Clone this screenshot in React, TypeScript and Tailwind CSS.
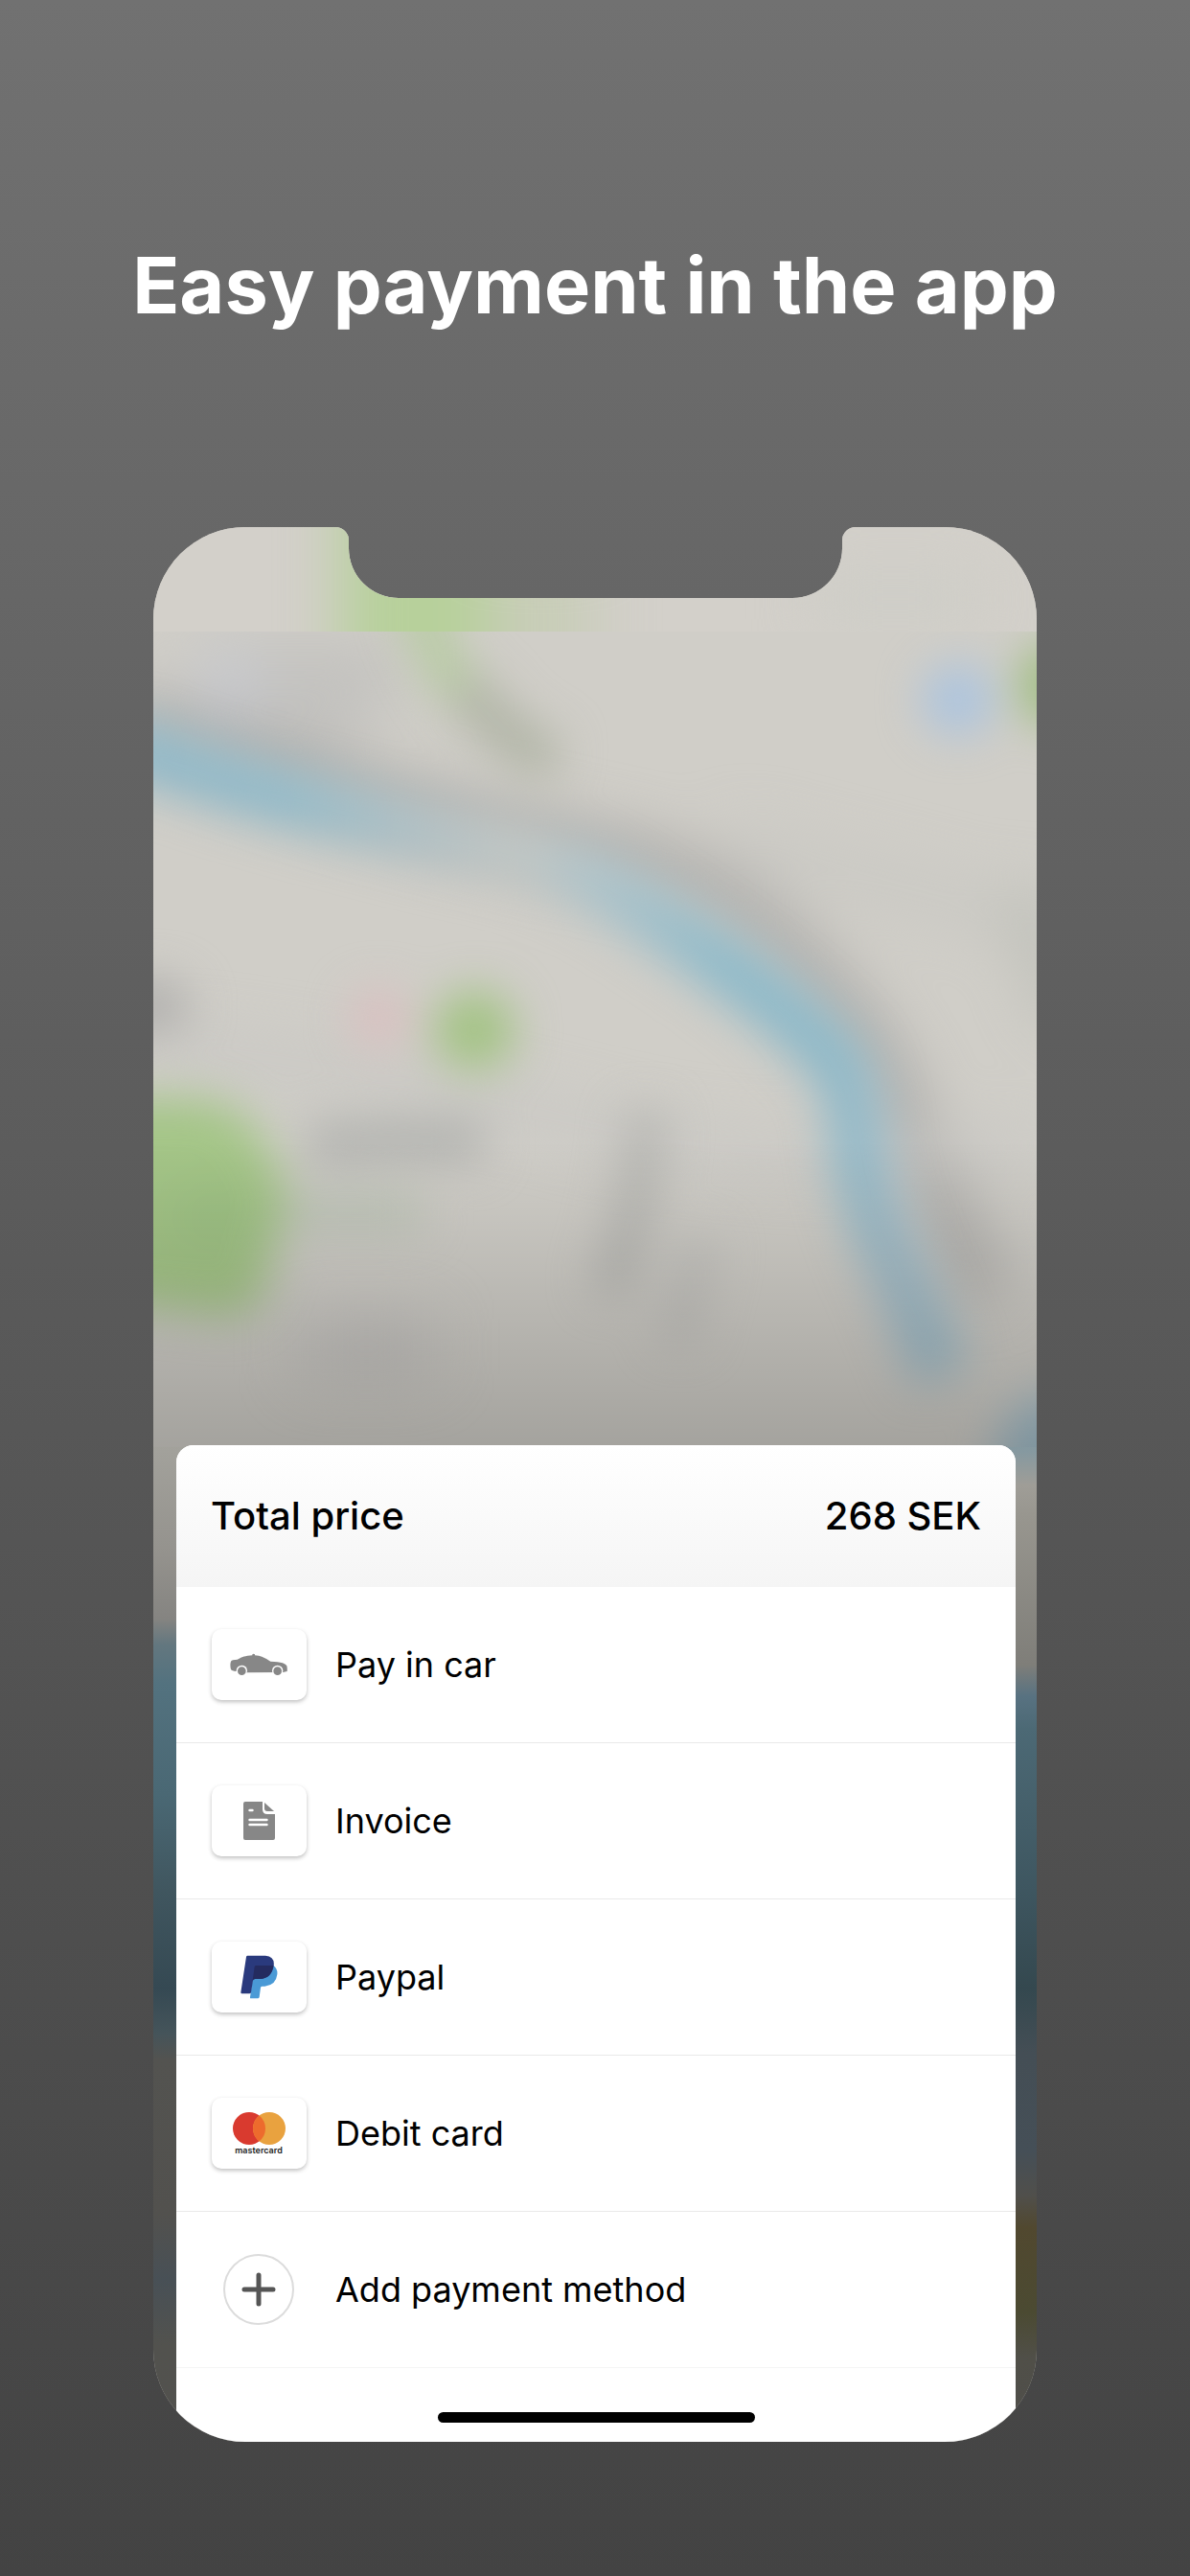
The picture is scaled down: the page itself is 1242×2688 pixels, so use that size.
import type { ReactNode } from "react";

type Method = {
  id: string;
  label: string;
  icon: ReactNode;
};

function CarIcon() {
  return (
    <svg width="60" height="24" viewBox="121 139 180 72" aria-hidden="true">
      <path
        fill="#878787"
        d="M123 168 Q124 162 130 161 L144 159 Q161 149 176 147 L191 146 V143 Q195 139 199 143 V146 Q213 147 221 150 Q236 156 248 165 Q272 166 286 170 Q297 174 299 179 Q301 187 300 196 L287 199 L172 200 L141 196 Q127 195 124 190 Q121 179 123 168 Z"
      />
      <circle cx="158" cy="194" r="17" fill="#fff" />
      <circle cx="270" cy="194" r="17" fill="#fff" />
      <circle cx="158" cy="195" r="13" fill="#878787" />
      <circle cx="270" cy="195" r="13" fill="#878787" />
    </svg>
  );
}

function InvoiceIcon() {
  return (
    <svg width="33" height="40" viewBox="0 0 33 40" aria-hidden="true">
      <path
        fill="#878787"
        d="M2 0 H20 V8 Q20 13 25 13 H33 V38 Q33 40 31 40 H2 Q0 40 0 38 V2 Q0 0 2 0 Z"
      />
      <path fill="#878787" d="M22 1 L32 10 H25 Q22 10 22 7 Z" />
      <path
        stroke="#fff"
        strokeWidth="2.4"
        strokeLinecap="round"
        d="M6.5 9 H9.5 M6.5 19 H24.5 M6.5 24 H24.5"
      />
    </svg>
  );
}

function PaypalIcon() {
  return (
    <svg width="39" height="46" viewBox="154 119 117 138" aria-hidden="true">
      <path
        fill="#4a9ad6"
        d="M257 152 Q271 162 269 180 Q265 214 230 217 H222 Q218 217 217 221 L213 251 Q212 255 208 255 H187 Q183 255 184 251 L198 152 Z"
      />
      <path
        fill="#2a3a7d"
        d="M176 121 H232 Q262 123 258 153 Q252 192 216 194 H200 Q194 194 193 199 L187 236 Q186 240 182 240 H158 Q155 240 155 236 L172 125 Q173 121 176 121 Z"
      />
      <path
        fill="#242b5f"
        d="M202 152 H257 Q251 192 216 194 H200 Q194 194 192 199 L198 156 Q199 152 202 152 Z"
      />
    </svg>
  );
}

function MastercardIcon() {
  return (
    <span className="flex flex-col items-center">
      <svg width="55" height="34" viewBox="0 0 55 34" aria-hidden="true">
        <circle cx="17" cy="17" r="17" fill="#d93a2f" />
        <circle cx="38" cy="17" r="17" fill="#e9a23f" />
        <path fill="#ed6b2d" d="M27.5 3.6 A17 17 0 0 1 27.5 30.4 A17 17 0 0 1 27.5 3.6 Z" />
      </svg>
      <span className="text-[9px] leading-[11px] font-semibold text-[#222]">mastercard</span>
    </span>
  );
}

const METHODS: Method[] = [
  { id: "car", label: "Pay in car", icon: <CarIcon /> },
  { id: "invoice", label: "Invoice", icon: <InvoiceIcon /> },
  { id: "paypal", label: "Paypal", icon: <PaypalIcon /> },
  { id: "card", label: "Debit card", icon: <MastercardIcon /> },
];

const LEFT_EDGE: [number, string][] = [
  [950, "#a4a39d"], [1072, "#94928d"], [1139, "#858481"], [1166, "#63777f"],
  [1207, "#53727f"], [1322, "#4a6874"], [1423, "#40565f"], [1525, "#354953"],
  [1572, "#45545a"], [1599, "#535350"], [1761, "#52514e"], [1829, "#485056"],
  [1897, "#52524e"], [1998, "#52514e"],
];

const RIGHT_EDGE: [number, string][] = [
  [950, "#8297a0"], [965, "#8699a0"], [1000, "#9f9d97"], [1031, "#98968f"], [1187, "#7f7e79"],
  [1220, "#587281"], [1254, "#4c6975"], [1423, "#3e5660"], [1525, "#34484f"],
  [1592, "#444e55"], [1694, "#454f57"], [1741, "#504f4b"], [1775, "#51482f"],
  [1863, "#4b4a32"], [1910, "#504f48"], [1998, "#4f4e4b"],
];

function EdgeGradient({ id, stops }: { id: string; stops: [number, string][] }) {
  return (
    <linearGradient id={id} gradientUnits="userSpaceOnUse" x1="0" y1="950" x2="0" y2="1998">
      {stops.map(([y, color]) => (
        <stop key={y} offset={(y - 950) / 1048} stopColor={color} />
      ))}
    </linearGradient>
  );
}

// Out-of-focus city map, cut out around the notch
function BlurredMap() {
  return (
    <svg
      className="absolute inset-0 h-full w-full"
      viewBox="0 0 922 1998"
      preserveAspectRatio="none"
      aria-hidden="true"
    >
      <defs>
        <clipPath id="screen">
          <path d="M0 0 H190 A14 14 0 0 1 204 14 V22 A52 52 0 0 0 256 74 H667 A52 52 0 0 0 719 22 V14 A14 14 0 0 1 733 0 H922 V1998 H0 Z" />
        </clipPath>
        <clipPath id="below-bar">
          <rect y="109" width="922" height="1889" />
        </clipPath>
        <clipPath id="bar">
          <rect width="922" height="109" />
        </clipPath>
        <filter
          id="soft"
          filterUnits="userSpaceOnUse"
          x="-200"
          y="-200"
          width="1322"
          height="2400"
          colorInterpolationFilters="sRGB"
        >
          <feGaussianBlur stdDeviation="23" />
        </filter>
        <filter
          id="softer"
          filterUnits="userSpaceOnUse"
          x="-200"
          y="-200"
          width="1322"
          height="2400"
          colorInterpolationFilters="sRGB"
        >
          <feGaussianBlur stdDeviation="30" />
        </filter>
        <linearGradient id="river" gradientUnits="userSpaceOnUse" x1="0" y1="0" x2="850" y2="0">
          <stop offset="0" stopColor="#90b9c9" />
          <stop offset="0.16" stopColor="#92bbca" />
          <stop offset="0.34" stopColor="#b2c1c5" />
          <stop offset="0.45" stopColor="#c1c7c5" />
          <stop offset="0.54" stopColor="#aec4cb" />
          <stop offset="0.7" stopColor="#8dbaca" />
          <stop offset="0.85" stopColor="#8db9c9" />
          <stop offset="0.9" stopColor="#a0bbc8" />
          <stop offset="1" stopColor="#9fbecb" />
        </linearGradient>
        <linearGradient id="shade" gradientUnits="userSpaceOnUse" x1="0" y1="640" x2="0" y2="960">
          <stop offset="0" stopColor="#000" stopOpacity="0" />
          <stop offset="1" stopColor="#000" stopOpacity="0.21" />
        </linearGradient>
        <EdgeGradient id="left-edge" stops={LEFT_EDGE} />
        <EdgeGradient id="right-edge" stops={RIGHT_EDGE} />
      </defs>

      <g clipPath="url(#screen)">
        <rect width="922" height="1998" fill="#d0cec8" />

        <g clipPath="url(#bar)">
          <rect width="922" height="109" fill="#d3d0ca" />
          <g filter="url(#softer)">
            <path d="M195 -80 H350 V200 H195 Z" fill="#b7d09b" />
            <path d="M350 20 H460 V200 H350 Z" fill="#c8cdb8" />
            <path d="M690 50 H860 V100 H690 Z" fill="#cdcdc7" />
          </g>
        </g>

        <g clipPath="url(#below-bar)">
          <g filter="url(#softer)">
            <path d="M40 120 H260 L240 200 L170 250 L60 220 Z" fill="#c3c2bf" />
            <circle cx="80" cy="165" r="36" fill="#c8cad0" />
            <path
              d="M-30 190 Q120 250 260 288 T500 345 T690 465 T800 660 L870 800"
              stroke="#abaaa8"
              strokeWidth="46"
              fill="none"
            />
            <path d="M600 330 Q760 370 960 420" stroke="#c9c8c3" strokeWidth="40" fill="none" />
            <path d="M900 380 L960 520" stroke="#c0c1ba" strokeWidth="50" fill="none" />
            <path d="M0 540 Q200 560 440 620 T922 640" stroke="#c7c6c3" strokeWidth="28" fill="none" />
            <path d="M155 855 H290" stroke="#c3c1be" strokeWidth="60" />
          </g>
          <g filter="url(#soft)">
            <path d="M270 60 Q294 140 330 180" stroke="#b5cb9f" strokeWidth="40" fill="none" />
            <path d="M325 165 Q365 225 420 245" stroke="#afb3a4" strokeWidth="44" fill="none" />
            <path
              d="M-40 224 Q60 262 160 288 T310 326 Q420 345 490 388 T620 475 T717 562 Q738 605 737 650 Q750 720 780 780 L823 886"
              stroke="url(#river)"
              strokeWidth="60"
              fill="none"
            />
            <circle cx="840" cy="180" r="37" fill="#abc4df" />
            <ellipse cx="940" cy="165" rx="36" ry="44" fill="#9fbd80" />
            <circle cx="335" cy="525" r="42" fill="#a3c384" />
            <circle cx="236" cy="512" r="30" fill="#dabfc0" />
            <ellipse cx="-4" cy="500" rx="42" ry="30" fill="#b1b0ae" />
            <path
              d="M-60 596 H50 Q100 604 120 650 Q153 700 126 750 Q120 810 90 824 Q40 820 -60 806 Z"
              fill="#a4c587"
            />
            <ellipse cx="65" cy="720" rx="50" ry="34" fill="#9ec184" />
            <path d="M160 645 Q260 638 345 640" stroke="#b1b2af" strokeWidth="44" fill="none" />
            <path d="M140 715 H280" stroke="#bcc4b6" strokeWidth="36" />
            <path d="M515 610 Q510 710 475 800" stroke="#b6b6b2" strokeWidth="40" fill="none" />
            <path d="M572 740 L545 850" stroke="#c1c0bc" strokeWidth="38" />
            <circle cx="950" cy="975" r="72" fill="#a0bcc9" />
          </g>
        </g>

        <rect y="640" width="922" height="1358" fill="url(#shade)" />
        <rect y="960" width="461" height="1038" fill="url(#left-edge)" />
        <rect x="461" y="960" width="461" height="1038" fill="url(#right-edge)" />
      </g>
    </svg>
  );
}

function MethodRow({ label, children }: { label: string; children: ReactNode }) {
  return (
    <li className="border-b border-[#e9e9e9] last:border-[#f5f5f5]">
      <button type="button" className="flex h-[162px] w-full items-center gap-[30px] px-9 text-left">
        <span className="flex w-[100px] shrink-0 justify-center">{children}</span>
        <span className="text-[36px] leading-[48px]">{label}</span>
      </button>
    </li>
  );
}

export default function App() {
  return (
    <main className="min-h-screen bg-linear-to-b from-[#717171] to-[#434343] px-40 pt-[246px] pb-[140px] font-['Inter','Liberation_Sans',sans-serif] text-black">
      <h1 className="-mx-20 text-center text-[81px] leading-[104px] font-bold text-white">
        Easy payment in the app
      </h1>

      <section
        aria-label="Payment"
        className="relative mt-[200px] overflow-hidden rounded-[96px] pt-[958px] pr-[22px] pl-6"
      >
        <BlurredMap />

        <div className="relative overflow-hidden rounded-t-[18px] bg-white">
          <div className="flex h-[148px] items-center justify-between bg-linear-to-b from-white to-[#f5f5f5] px-9 text-[40px] leading-[52px] font-medium">
            <h2>Total price</h2>
            <p>268 SEK</p>
          </div>

          <ul>
            {METHODS.map((m) => (
              <MethodRow key={m.id} label={m.label}>
                <span className="flex h-[74px] w-[99px] items-center justify-center rounded-[10px] bg-white shadow-[0_2px_4px_rgba(0,0,0,0.25)]">
                  {m.icon}
                </span>
              </MethodRow>
            ))}
            <MethodRow label="Add payment method">
              <span className="flex size-[74px] items-center justify-center rounded-full border-2 border-[#dcdcdc]">
                <svg width="36" height="36" viewBox="0 0 36 36" aria-hidden="true">
                  <path d="M18 3 V33 M3 18 H33" stroke="#555" strokeWidth="5" strokeLinecap="round" />
                </svg>
              </span>
            </MethodRow>
          </ul>

          <div className="flex justify-center pt-[46px] pb-5">
            <div className="h-[11px] w-[331px] rounded-full bg-black" />
          </div>
        </div>
      </section>
    </main>
  );
}
